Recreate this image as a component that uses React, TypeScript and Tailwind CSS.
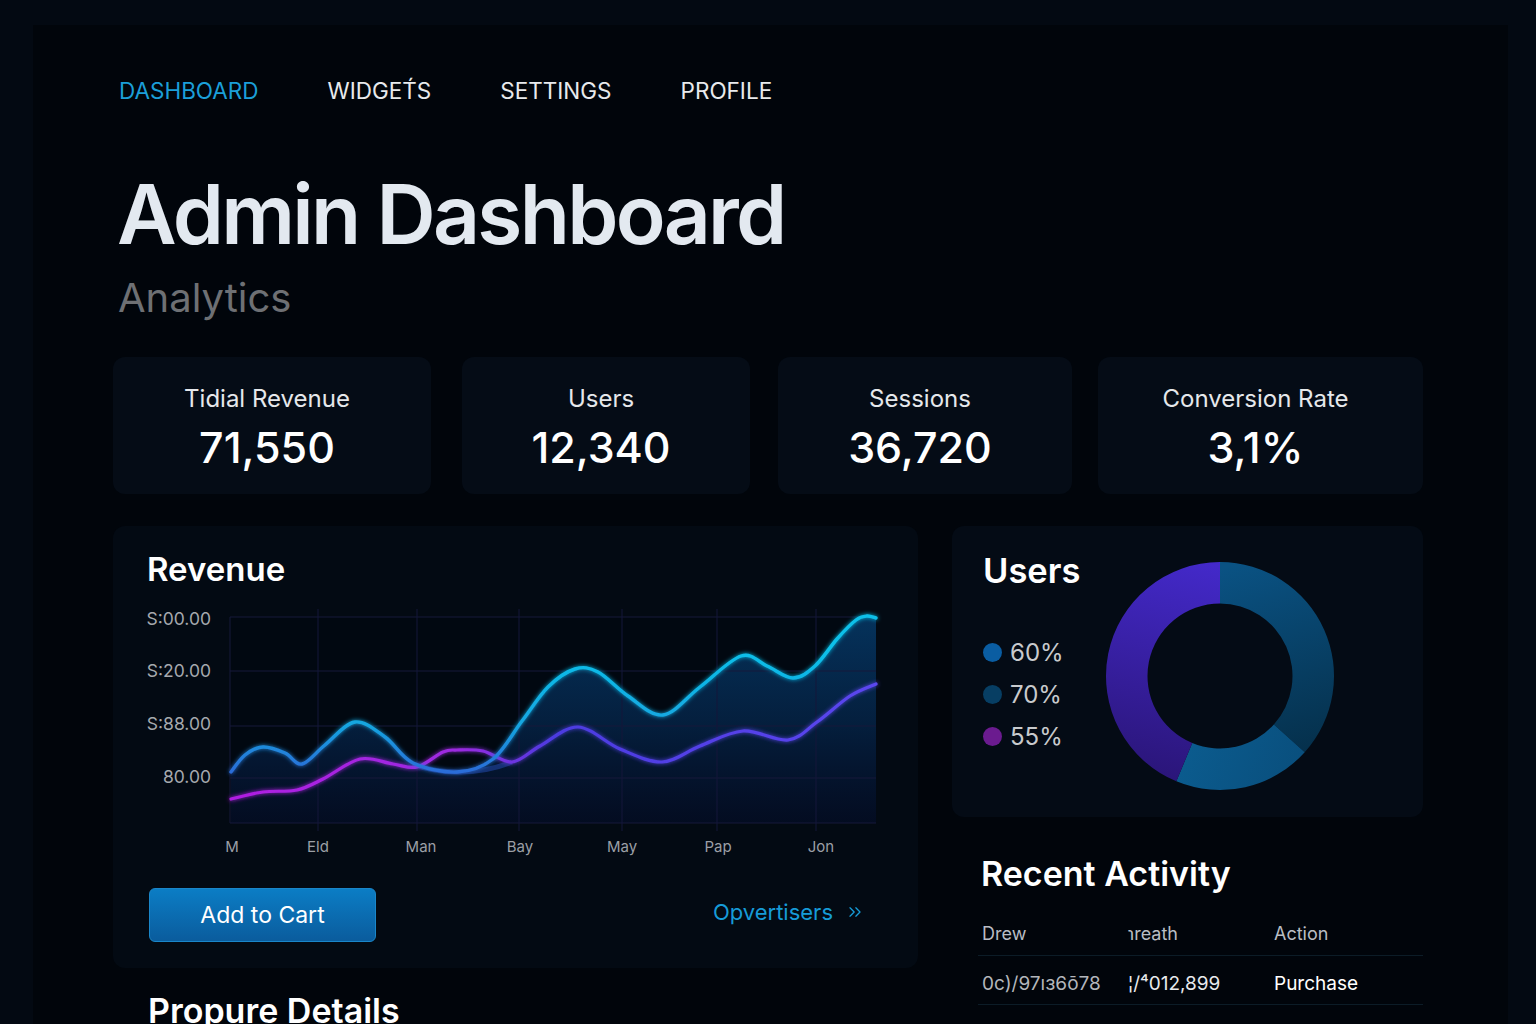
import React from "react";
import { ChevronsRight } from "lucide-react";

type P = [number, number];

function smooth(pts: P[]): string {
  let d = `M ${pts[0][0]} ${pts[0][1]}`;
  for (let i = 0; i < pts.length - 1; i++) {
    const p0 = pts[i - 1] || pts[i];
    const p1 = pts[i];
    const p2 = pts[i + 1];
    const p3 = pts[i + 2] || p2;
    const t = 1 / 6;
    const c1x = p1[0] + (p2[0] - p0[0]) * t;
    const c1y = p1[1] + (p2[1] - p0[1]) * t;
    const c2x = p2[0] - (p3[0] - p1[0]) * t;
    const c2y = p2[1] - (p3[1] - p1[1]) * t;
    d += ` C ${c1x.toFixed(1)} ${c1y.toFixed(1)} ${c2x.toFixed(1)} ${c2y.toFixed(1)} ${p2[0]} ${p2[1]}`;
  }
  return d;
}

const cyan: P[] = [
  [231, 773], [245, 756], [263, 748], [285, 754], [302, 765], [325, 746], [355, 723],
  [385, 738], [413, 764], [457, 773], [493, 760], [522, 722], [548, 688], [575, 670],
  [598, 673], [628, 697], [663, 716], [700, 688], [741, 657], [767, 667], [793, 679],
  [815, 667], [837, 640], [856, 621], [867, 617], [876, 619],
];

const purple: P[] = [
  [231, 800], [263, 793], [297, 791], [323, 780], [360, 760], [393, 765], [417, 768],
  [443, 753], [457, 751], [483, 752], [512, 763], [540, 747], [578, 728], [620, 750],
  [662, 763], [700, 747], [743, 732], [788, 741], [817, 723], [850, 697], [876, 685],
];

function RevenueChart() {
  const cyanPath = smooth(cyan);
  const purplePath = smooth(purple);
  const area = `${cyanPath} L 876 824 L 231 824 Z`;
  const hLines = [618, 672, 727, 779, 824];
  const vLines = [318, 417, 519, 622, 717, 816];
  const yLabels: [string, number][] = [
    ["S:00.00", 625.5],
    ["S:20.00", 677.5],
    ["S:88.00", 730.5],
    ["80.00", 783.5],
  ];
  const xLabels: [string, number][] = [
    ["M", 232], ["Eld", 318], ["Man", 421], ["Bay", 520], ["May", 622], ["Pap", 718], ["Jon", 821],
  ];
  return (
    <svg width={760} height={260} viewBox="140 600 760 260" className="block">
      <defs>
        <linearGradient id="areaG" gradientUnits="userSpaceOnUse" x1="0" y1="617" x2="0" y2="824">
          <stop offset="0" stopColor="#053560" stopOpacity="0.95" />
          <stop offset="0.5" stopColor="#052447" stopOpacity="0.85" />
          <stop offset="1" stopColor="#050f2c" stopOpacity="0.6" />
        </linearGradient>
        <linearGradient id="cyanG" gradientUnits="userSpaceOnUse" x1="0" y1="650" x2="0" y2="775">
          <stop offset="0" stopColor="#0fc0ea" />
          <stop offset="0.6" stopColor="#13a6e0" />
          <stop offset="1" stopColor="#2c6ad8" />
        </linearGradient>
        <linearGradient id="purpG" gradientUnits="userSpaceOnUse" x1="231" y1="0" x2="876" y2="0">
          <stop offset="0" stopColor="#b01ee2" />
          <stop offset="0.35" stopColor="#9c2ae0" />
          <stop offset="0.5" stopColor="#4c3be0" />
          <stop offset="1" stopColor="#5b46ef" />
        </linearGradient>
        <filter id="glow" x="-10%" y="-20%" width="120%" height="140%">
          <feGaussianBlur stdDeviation="2" result="b" />
          <feMerge>
            <feMergeNode in="b" />
            <feMergeNode in="SourceGraphic" />
          </feMerge>
        </filter>
      </defs>
      <rect x="230" y="618" width="646" height="206" fill="#010811" />
      <path d={area} fill="url(#areaG)" />
      {hLines.map((y) => (
        <line key={y} x1="230" x2="876" y1={y} y2={y} stroke="#17183a" strokeWidth="1" />
      ))}
      {vLines.map((x) => (
        <line key={x} x1={x} x2={x} y1="610" y2="832" stroke="#15163a" strokeWidth="1" />
      ))}
      <line x1="230" x2="230" y1="618" y2="824" stroke="#17183a" strokeWidth="1" />
      <path d="M 413 765 C 440 776 480 776 512 763" fill="none" stroke="#2a55c8" strokeWidth="5" strokeOpacity="0.45" />
      <path d={purplePath} fill="none" stroke="url(#purpG)" strokeWidth="3.2" strokeLinecap="round" filter="url(#glow)" />
      <path d={cyanPath} fill="none" stroke="url(#cyanG)" strokeWidth="3.4" strokeLinecap="round" filter="url(#glow)" />
      {yLabels.map(([t, y]) => (
        <text key={t} x="211" y={y} textAnchor="end" fontSize="17.5" fill="#a6a9ae" fontFamily="Inter, sans-serif">
          {t}
        </text>
      ))}
      {xLabels.map(([t, x]) => (
        <text key={t} x={x} y="853" textAnchor="middle" fontSize="15" fill="#9b9fa6" fontFamily="Inter, sans-serif">
          {t}
        </text>
      ))}
    </svg>
  );
}

function arcPath(cx: number, cy: number, R: number, r: number, a0: number, a1: number): string {
  const rad = (a: number) => (a * Math.PI) / 180;
  const pt = (a: number, rr: number) => [cx + rr * Math.sin(rad(a)), cy - rr * Math.cos(rad(a))];
  const large = a1 - a0 > 180 ? 1 : 0;
  const [x0, y0] = pt(a0, R);
  const [x1, y1] = pt(a1, R);
  const [x2, y2] = pt(a1, r);
  const [x3, y3] = pt(a0, r);
  return `M ${x0} ${y0} A ${R} ${R} 0 ${large} 1 ${x1} ${y1} L ${x2} ${y2} A ${r} ${r} 0 ${large} 0 ${x3} ${y3} Z`;
}

function Donut() {
  const cx = 1219.5;
  const cy = 676;
  const R = 114;
  const r = 72.5;
  return (
    <svg width={230} height={230} viewBox="1104.5 561 230 230" className="block shrink-0">
      <defs>
        <linearGradient id="s1" gradientUnits="userSpaceOnUse" x1="1240" y1="562" x2="1300" y2="760">
          <stop offset="0" stopColor="#0a5283" />
          <stop offset="1" stopColor="#052f4a" />
        </linearGradient>
        <linearGradient id="s2" gradientUnits="userSpaceOnUse" x1="1180" y1="740" x2="1300" y2="790">
          <stop offset="0" stopColor="#0b5c8f" />
          <stop offset="1" stopColor="#094e7c" />
        </linearGradient>
        <linearGradient id="s3" gradientUnits="userSpaceOnUse" x1="1200" y1="562" x2="1150" y2="790">
          <stop offset="0" stopColor="#4329c9" />
          <stop offset="1" stopColor="#291474" />
        </linearGradient>
      </defs>
      <path d={arcPath(cx, cy, R, r, 0, 132)} fill="url(#s1)" />
      <path d={arcPath(cx, cy, R, r, 132, 202.5)} fill="url(#s2)" />
      <path d={arcPath(cx, cy, R, r, 202.5, 360)} fill="url(#s3)" />
    </svg>
  );
}

function StatCard({ label, value, w, ml }: { label: string; value: string; w: string; ml: string }) {
  return (
    <div className={`${w} ${ml} flex h-[137px] shrink-0 flex-col items-center rounded-xl bg-[#050c16] pr-[10px] pt-[30px]`}>
      <div className="text-[24px] leading-none text-[#e6e8eb]">{label}</div>
      <div className="mt-[15px] text-[43px] font-medium leading-none text-white">{value}</div>
    </div>
  );
}

export default function App() {
  return (
    <div className="h-[1024px] w-full overflow-hidden bg-[#030912] pl-[33px] pr-[28px] pt-[25px] font-['Inter',sans-serif]">
      <div className="h-full bg-[#01050b] pl-[80px] pt-[52px]">
        <nav className="ml-[6px] flex gap-[69px] text-[22.5px] leading-[28px] text-[#e8eaed]">
          <span className="text-[#1b9fd9]">DASHBOARD</span>
          <span>WIDGET&#769;S</span>
          <span>SETTINGS</span>
          <span>PROFILE</span>
        </nav>
        <h1 className="ml-[4px] mt-[69px] text-[82px] font-semibold leading-none tracking-[-0.033em] text-[#e3e9f0]">
          Admin Dashboard
        </h1>
        <div className="ml-[5px] mt-[22px] text-[40px] leading-none text-[#6e7074]">Analytics</div>

        <div className="mt-[39px] flex">
          <StatCard label="Tidial Revenue" value="71,550" w="w-[318px]" ml="ml-0" />
          <StatCard label="Users" value="12,340" w="w-[288px]" ml="ml-[31px]" />
          <StatCard label="Sessions" value="36,720" w="w-[294px]" ml="ml-[28px]" />
          <StatCard label="Conversion Rate" value="3,1%" w="w-[325px]" ml="ml-[26px]" />
        </div>

        <div className="mt-[32px] flex">
          <div className="w-[805px] shrink-0">
            <div className="h-[442px] rounded-xl bg-[#030a13] pt-[27px]">
              <div className="ml-[34px] text-[33px] font-semibold leading-none text-white">Revenue</div>
              <div className="ml-[27px] mt-[13px]">
                <RevenueChart />
              </div>
              <div className="mt-[29px] flex items-center justify-between pl-[36px] pr-[53px]">
                <button className="flex h-[54px] w-[227px] items-center justify-center rounded-md border border-[#1a86c9] bg-gradient-to-b from-[#0b7dc5] to-[#0a5c9d] text-[23px] text-white">
                  Add to Cart
                </button>
                <div className="-mt-[6px] flex items-center gap-[12px] text-[22px] leading-none text-[#169bd8]">
                  <span>Opvertisers</span>
                  <ChevronsRight size={20} strokeWidth={1.6} />
                </div>
              </div>
            </div>
            <div className="ml-[35px] mt-[26px] text-[34px] font-semibold leading-none text-white">Propure Details</div>
          </div>

          <div className="ml-[34px] w-[471px] shrink-0">
            <div className="flex h-[291px] rounded-xl bg-[#040b15]">
              <div className="w-[153px] shrink-0 pl-[31px] pt-[28px]">
                <div className="text-[34.5px] font-semibold leading-none text-white">Users</div>
                <div className="mt-[43px] flex flex-col">
                  {[
                    ["60%", "bg-[#0a5da2]"],
                    ["70%", "bg-[#073e63]"],
                    ["55%", "bg-[#6b1b8f]"],
                  ].map(([t, c]) => (
                    <div key={t} className="flex h-[42px] items-center gap-[8px]">
                      <span className={`h-[19px] w-[19px] rounded-full ${c}`} />
                      <span className="text-[24px] leading-none text-[#c8cacd]">{t}</span>
                    </div>
                  ))}
                </div>
              </div>
              <div className="mt-[35px]">
                <Donut />
              </div>
            </div>

            <div className="ml-[29px] mt-[40px] text-[34px] font-semibold leading-none text-white">Recent Activity</div>
            <div className="ml-[26px] mt-[34px]">
              <div className="flex border-b border-[#0c1c27] pb-[12px] text-[18px] leading-none text-[#b9bdc4]">
                <span className="w-[146px] pl-[4px]">Drew</span>
                <span className="w-[146px] pl-[4px]">&#639;reath</span>
                <span className="w-[146px] pl-[4px]">Action</span>
              </div>
              <div className="flex border-b border-[#0c1c27] pb-[11px] pt-[18px] text-[19px] leading-none">
                <span className="w-[146px] pl-[4px] text-[#b3b6bb]">0c)/97ıɜ6ō78</span>
                <span className="w-[146px] pl-[4px] text-[#e8eaed]">¦/⁴012,899</span>
                <span className="w-[146px] pl-[4px] text-white">Purchase</span>
              </div>
            </div>
          </div>
        </div>
      </div>
    </div>
  );
}
